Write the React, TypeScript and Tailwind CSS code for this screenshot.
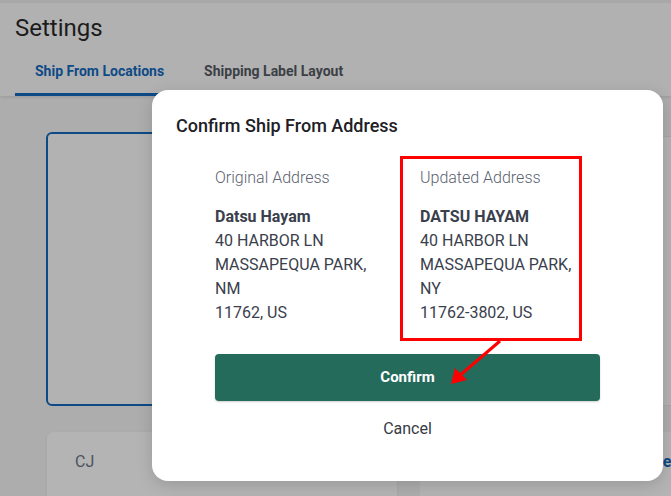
import React from "react";

export default function App() {
  return (
    <div className="relative w-[671px] h-[496px] overflow-hidden bg-[#adadad] font-['Roboto',sans-serif]">
      {/* header */}
      <div className="relative z-10 h-[96px] bg-[#b1b1b1] shadow-[0_1px_3px_rgba(0,0,0,0.12)] flex flex-col">
        <div className="h-[3px] bg-[#a8a8a8]" />
        <div className="pl-[15px] pt-[10px] text-[24px] leading-[30px] text-[#1c1c1c]">Settings</div>
        <div className="flex pl-[15px] mt-[15px] h-[45px]">
          <div className="flex flex-col justify-between">
            <div className="px-[20px] pt-[3px] text-[14px] font-bold text-[#0d4a86]">Ship From Locations</div>
            <div className="h-[3px] bg-[#0d4a86]" />
          </div>
          <div className="px-[20px] pt-[3px] text-[14px] font-bold text-[#3b3f46]">Shipping Label Layout</div>
        </div>
      </div>

      {/* content */}
      <div className="grid grid-cols-[350px_350px] gap-x-[23px] pl-[47px] pt-[36px]">
        <div className="flex flex-col gap-[26px]">
          <div className="h-[274px] -ml-px rounded-[6px] border-2 border-[#0d4a86] bg-[#b2b2b2]" />
          <div className="h-[80px] rounded-t-[6px] bg-[#b4b4b4] border-b border-[#a2a2a2] shadow-[0_1px_3px_rgba(0,0,0,0.08)] pl-[28px] pt-[18px] text-[16px] text-[#4b5260]">
            CJ
          </div>
        </div>
        <div className="flex flex-col gap-[26px] pt-[4px]">
          <div className="h-[270px] rounded-[6px] bg-[#b3b3b3] border border-[#a6a6a6]" />
          <div className="h-[80px] rounded-t-[6px] bg-[#b4b4b4] border-b border-[#a2a2a2] pl-[193px] pt-[18px] text-[16px] font-bold text-[#0d4a86]">
            Remove
          </div>
        </div>
      </div>

      {/* modal */}
      <div className="absolute z-20 left-[152px] top-[90px] w-[511px] h-[391px] rounded-[16px] bg-white shadow-[0_4px_16px_rgba(0,0,0,0.15)] flex flex-col">
        <div className="pl-[24px] mt-[24px] text-[18px] leading-[24px] font-medium text-[#1d2025]">
          Confirm Ship From Address
        </div>
        <div className="flex flex-col px-[63px] pt-[28px]">
          <div className="grid grid-cols-[181px_181px] gap-x-[24px] text-[16px] leading-[24px] text-[#3a404c]">
            <div className="flex flex-col">
              <div className="text-[#5b6270] font-light">Original Address</div>
              <div className="mt-[15px] font-bold">Datsu Hayam</div>
              <div>40 HARBOR LN</div>
              <div>MASSAPEQUA PARK,</div>
              <div>NM</div>
              <div>11762, US</div>
            </div>
            <div className="flex flex-col">
              <div className="text-[#5b6270] font-light">Updated Address</div>
              <div className="mt-[15px] font-bold">DATSU HAYAM</div>
              <div>40 HARBOR LN</div>
              <div>MASSAPEQUA PARK,</div>
              <div>NY</div>
              <div>11762-3802, US</div>
            </div>
          </div>
          <button className="mt-[29px] h-[47px] rounded-[4px] bg-[#246b5c] text-white text-[15px] font-bold shadow-[0_1px_2px_rgba(0,0,0,0.2)]">
            Confirm
          </button>
          <button className="mt-[16px] h-[24px] text-[16px] text-[#363b45]">Cancel</button>
        </div>

        {/* annotation box */}
        <div className="absolute left-[248px] top-[66px] w-[182px] h-[185px] border-[3px] border-[#ff0000]" />
      </div>

      {/* annotation arrow */}
      <svg className="absolute z-30 left-0 top-0 pointer-events-none" width="671" height="496">
        <line x1="500" y1="341" x2="458" y2="377" stroke="#ff0000" strokeWidth="3" />
        <polygon points="451,384 455,368 467,380" fill="#ff0000" />
      </svg>
    </div>
  );
}
